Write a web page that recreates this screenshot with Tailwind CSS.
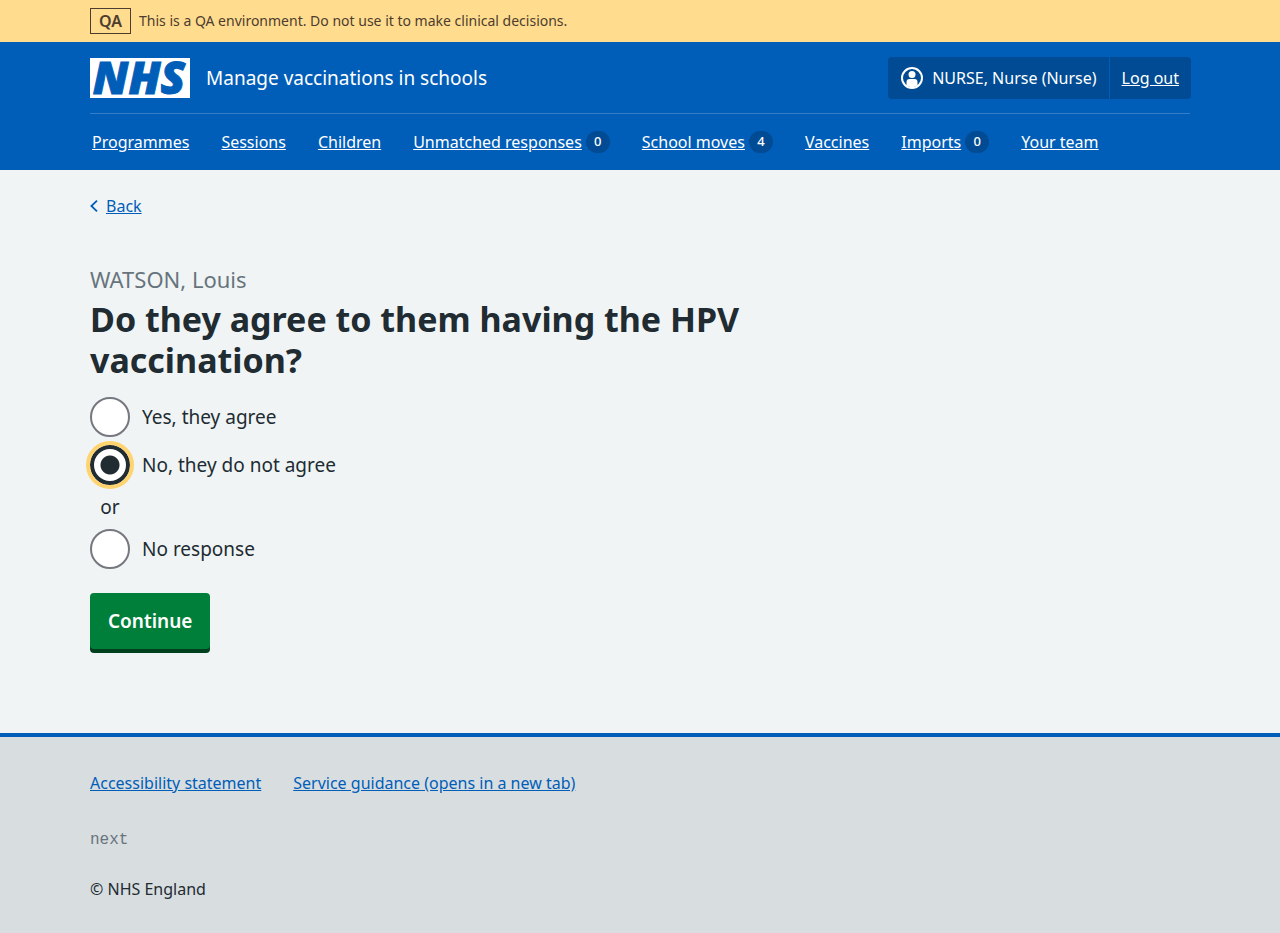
<!DOCTYPE html>
<html lang="en">
<head>
<meta charset="utf-8">
<meta name="viewport" content="width=device-width, initial-scale=1">
<title>Do they agree to them having the HPV vaccination?</title>
<script src="https://cdn.jsdelivr.net/npm/@tailwindcss/browser@4"></script>
</head>
<body class="flex min-h-screen flex-col bg-[#d8dde0] font-['Noto_Sans','Open_Sans',sans-serif] text-base text-[#212b32]">

<div class="bg-[#ffdc8e] px-8 text-[#4d3c2f]">
  <div class="mx-auto flex h-[42px] max-w-[1100px] items-center gap-2">
    <strong class="flex h-[26px] items-center border border-[#4d3c2f] px-2 text-base font-semibold">QA</strong>
    <span class="text-sm">This is a QA environment. Do not use it to make clinical decisions.</span>
  </div>
</div>

<header class="bg-[#005eb8] px-8 text-white">
  <div class="mx-auto max-w-[1100px]">
    <div class="flex items-center justify-between border-b border-white/20 pt-[15px] pb-[14px]">
      <a href="#" class="flex items-center gap-4">
        <svg class="h-10 w-[100px] overflow-visible" viewBox="0 0 100 40" role="img" aria-label="NHS">
          <rect width="100" height="40" fill="#fff"/>
          <text x="49" y="36" text-anchor="middle" class="fill-[#005eb8] stroke-[#005eb8] stroke-1 font-['Open_Sans',sans-serif] text-[45px] font-extrabold italic">NHS</text>
        </svg>
        <span class="text-[19px]">Manage vaccinations in schools</span>
      </a>
      <div class="-mr-px flex h-[42px] items-stretch rounded bg-[#004b93]">
        <span class="flex items-center gap-2 border-r border-[#005eb8] pr-3 pl-3">
          <svg class="size-6" viewBox="0 0 24 24" fill="none" aria-hidden="true">
            <circle cx="12" cy="12" r="10" stroke="#fff" stroke-width="2"/>
            <circle cx="12" cy="8.500" r="3.500" fill="#fff"/>
            <path d="M6.500 19.500V16a3 3 0 0 1 3-3h5a3 3 0 0 1 3 3v3.500a10 10 0 0 1-11 0Z" fill="#fff"/>
          </svg>
          NURSE, Nurse (Nurse)
        </span>
        <a href="#" class="flex items-center px-3 underline">Log out</a>
      </div>
    </div>
    <nav class="flex h-14 items-center gap-8 px-0.5" aria-label="Menu">
      <a href="#" class="underline">Programmes</a>
      <a href="#" class="underline">Sessions</a>
      <a href="#" class="underline">Children</a>
      <a href="#" class="flex items-center gap-1"><span class="underline">Unmatched responses</span><span class="flex h-[22px] w-6 items-center justify-center rounded-full bg-[#004b93] text-[13px] font-medium">0</span></a>
      <a href="#" class="flex items-center gap-1"><span class="underline">School moves</span><span class="flex h-[22px] w-6 items-center justify-center rounded-full bg-[#004b93] text-[13px] font-medium">4</span></a>
      <a href="#" class="underline">Vaccines</a>
      <a href="#" class="flex items-center gap-1"><span class="underline">Imports</span><span class="flex h-[22px] w-6 items-center justify-center rounded-full bg-[#004b93] text-[13px] font-medium">0</span></a>
      <a href="#" class="underline">Your team</a>
    </nav>
  </div>
</header>

<div class="border-b-4 border-[#005eb8] bg-[#f0f4f5] px-8 pb-20">
  <div class="mx-auto max-w-[1100px] pt-6">
    <a href="#" class="inline-flex items-center gap-2 text-[#005eb8]">
      <svg class="h-3 w-2" viewBox="0 0 8 12" fill="none" aria-hidden="true"><path d="M7 .7 1.400 6 7 11.300" stroke="#005eb8" stroke-width="1.800"/></svg>
      <span class="underline">Back</span>
    </a>
    <main class="max-w-[726px] pt-[45px]">
      <form>
        <fieldset>
          <legend>
            <span class="block pb-1 text-[22px] leading-8 text-[#68747d]">WATSON, Louis</span>
            <h1 class="text-[34px] leading-[41px] font-bold">Do they agree to them having the HPV vaccination?</h1>
          </legend>
          <div class="flex flex-col gap-2 pt-4 text-[19px]">
            <div class="flex items-center gap-3">
              <input type="radio" id="agree" name="response" class="size-10 appearance-none rounded-full border-2 border-[#76777f] bg-white">
              <label for="agree">Yes, they agree</label>
            </div>
            <div class="flex items-center gap-3">
              <input type="radio" id="disagree" name="response" checked class="size-10 appearance-none rounded-full border-4 border-[#212b32] bg-white bg-[radial-gradient(circle,#212b32_9px,#fff_10px)] outline-4 outline-[#ffd36e]">
              <label for="disagree">No, they do not agree</label>
            </div>
            <div class="w-10 text-center leading-7">or</div>
            <div class="flex items-center gap-3">
              <input type="radio" id="none" name="response" class="size-10 appearance-none rounded-full border-2 border-[#76777f] bg-white">
              <label for="none">No response</label>
            </div>
          </div>
        </fieldset>
        <button type="button" class="mt-6 mb-1 flex h-14 items-center rounded bg-[#007f3b] px-[18px] text-[19px] font-semibold text-white shadow-[0_4px_0_#00401e]">Continue</button>
      </form>
    </main>
  </div>
</div>

<footer class="px-8">
  <div class="mx-auto max-w-[1100px] pt-[34px] pb-8">
    <div class="flex gap-8 text-[#005eb8]">
      <a href="#" class="underline">Accessibility statement</a>
      <a href="#" class="underline">Service guidance (opens in a new tab)</a>
    </div>
    <p class="pt-[33px] font-['Liberation_Mono',monospace] text-[#68747d]">next</p>
    <p class="pt-[25px]">© NHS England</p>
  </div>
</footer>
</body>
</html>
